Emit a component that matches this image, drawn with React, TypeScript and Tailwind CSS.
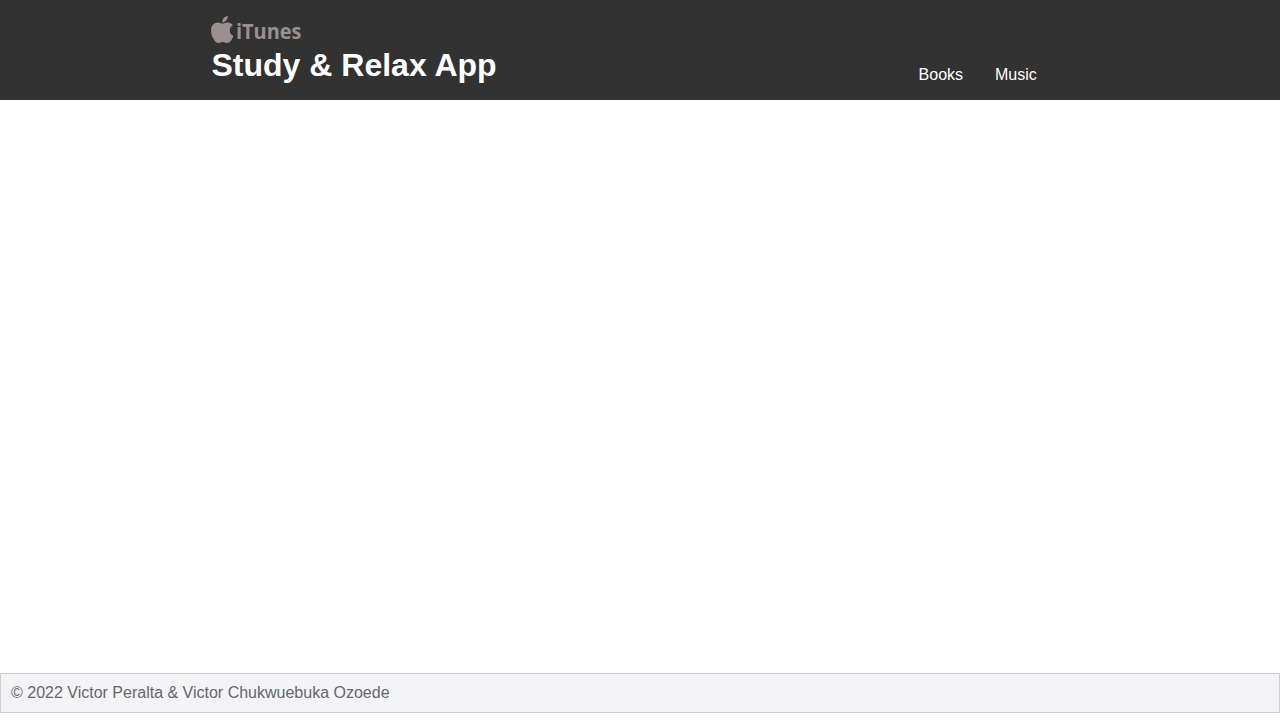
const LINKS = ["Books", "Music"]

function Logo() {
  return (
    <div className="flex h-[27px] gap-[3px] text-[#9b908f]" aria-label="iTunes">
      <svg
        viewBox="4 32 369 448"
        preserveAspectRatio="none"
        fill="currentColor"
        className="h-[27px] w-[22px] shrink-0"
      >
        <path d="M318.7 268.7c-.2-36.7 16.4-64.4 50-84.8-18.8-26.9-47.2-41.7-84.7-44.6-35.5-2.8-74.3 20.7-88.5 20.7-15 0-49.4-19.7-76.4-19.7C63.3 141.2 4 184.8 4 273.5q0 39.3 14.4 81.2c12.8 36.7 59 126.7 107.2 125.2 25.2-.6 43-17.9 75.8-17.9 31.8 0 48.3 17.9 76.4 17.9 48.6-.7 90.4-82.5 102.6-119.3-65.2-30.7-61.7-90-61.7-91.9zm-56.6-164.2c27.3-32.4 24.8-61.9 24-72.5-24.1 1.4-52 16.4-67.9 34.9-17.5 19.8-27.8 44.3-25.6 71.9 26.1 2 49.9-11.4 69.5-34.3z" />
      </svg>
      <svg viewBox="0 0 70 30" fill="currentColor" className="h-[30px] w-[70px]">
        <text
          x="0"
          y="23"
          textLength="65.5"
          lengthAdjust="spacingAndGlyphs"
          className="font-['Open_Sans',sans-serif] text-[21.5px] font-bold"
        >
          iTunes
        </text>
      </svg>
    </div>
  )
}

function Header() {
  return (
    <header className="h-[100px] bg-[#323232] text-white">
      <div className="mx-auto flex h-full w-[858px] justify-between">
        <div className="pt-4">
          <Logo />
          <h1 className="pl-[0.5px] text-[32px] leading-[44px] font-bold">Study &amp; Relax App</h1>
        </div>
        <nav className="flex items-end gap-8 pr-[32.2px] pb-[13px]">
          {LINKS.map((label) => (
            <a key={label} href="#" className="text-base">
              {label}
            </a>
          ))}
        </nav>
      </div>
    </header>
  )
}

export default function App() {
  return (
    <div className="flex h-[713px] flex-col bg-white font-['Liberation_Sans',Arial,sans-serif]">
      <Header />
      <main className="flex-1" />
      <footer className="h-10 border border-[#cdcdd2] bg-[#f4f4f6] px-2.5 text-base leading-[38px] text-[#63686d]">
        © 2022 Victor Peralta &amp; Victor Chukwuebuka Ozoede
      </footer>
    </div>
  )
}
